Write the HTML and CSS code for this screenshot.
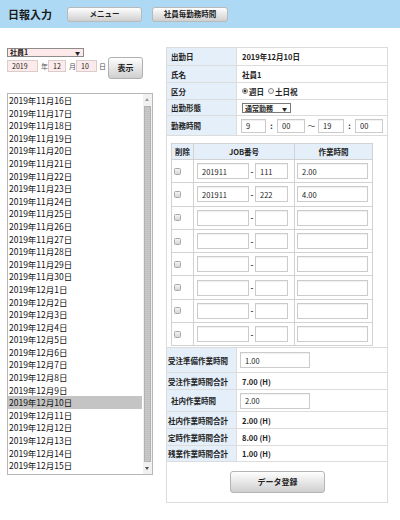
FILE: index.html
```html
<!DOCTYPE html>
<html lang="ja">
<head>
<meta charset="utf-8">
<title>日報入力</title>
<link rel="stylesheet" href="styles.css">
</head>
<body>
<header class="topbar">
  <h1 class="title">日報入力</h1>
  <button class="btn btn-top">メニュー</button>
  <button class="btn btn-top btn-top2">社員毎勤務時間</button>
</header>
<main class="main">
  <section class="left">
    <div class="fake-select emp-select"><span>社員1</span><span class="sel-arrow">▼</span></div>
    <div class="date-row">
      <input class="in-pink in-year" value="2019"><span class="unit">年</span>
      <input class="in-pink in-month" value="12"><span class="unit">月</span>
      <input class="in-pink in-day" value="10"><span class="unit unit-day">日</span>
      <button class="btn btn-show">表示</button>
    </div>
    <div class="listbox">
      <ul class="list">
        <li>2019年11月16日</li>
        <li>2019年11月17日</li>
        <li>2019年11月18日</li>
        <li>2019年11月19日</li>
        <li>2019年11月20日</li>
        <li>2019年11月21日</li>
        <li>2019年11月22日</li>
        <li>2019年11月23日</li>
        <li>2019年11月24日</li>
        <li>2019年11月25日</li>
        <li>2019年11月26日</li>
        <li>2019年11月27日</li>
        <li>2019年11月28日</li>
        <li>2019年11月29日</li>
        <li>2019年11月30日</li>
        <li>2019年12月1日</li>
        <li>2019年12月2日</li>
        <li>2019年12月3日</li>
        <li>2019年12月4日</li>
        <li>2019年12月5日</li>
        <li>2019年12月6日</li>
        <li>2019年12月7日</li>
        <li>2019年12月8日</li>
        <li>2019年12月9日</li>
        <li class="selected">2019年12月10日</li>
        <li>2019年12月11日</li>
        <li>2019年12月12日</li>
        <li>2019年12月13日</li>
        <li>2019年12月14日</li>
        <li>2019年12月15日</li>
      </ul>
      <div class="scrollbar">
        <div class="sb-arrow sb-up"></div>
        <div class="sb-thumb"></div>
        <div class="sb-arrow sb-down"></div>
      </div>
    </div>
  </section>

  <section class="right">
    <table class="form">
      <tr class="r18"><th>出勤日</th><td class="val">2019年12月10日</td></tr>
      <tr class="r17"><th>氏名</th><td class="val">社員1</td></tr>
      <tr class="r17"><th>区分</th><td class="val">
        <span class="radio-group"><span class="radio checked"></span>週日</span><span class="radio-group"><span class="radio"></span>土日祝</span>
      </td></tr>
      <tr class="r16"><th>出勤形態</th><td class="val">
        <span class="fake-select work-select"><span>通常勤務</span><span class="sel-arrow">▼</span></span>
      </td></tr>
      <tr class="r20"><th>勤務時間</th><td class="val">
        <div class="time-row">
          <input class="in-white t1" value="9"><span class="sep">:</span><input class="in-white t2" value="00"><span class="sep sep-wide">～</span><input class="in-white t3" value="19"><span class="sep">:</span><input class="in-white t4" value="00">
        </div>
      </td></tr>
      <tr><td colspan="2" class="jobcell">
        <table class="jobs">
          <tr class="jh"><th class="c-del">削除</th><th class="c-job">JOB番号</th><th class="c-time">作業時間</th></tr>
          <tr class="jr"><td class="c-del"><span class="chk"></span></td><td class="c-job"><input class="in-white j1" value="201911"><span class="dash">-</span><input class="in-white j2" value="111"></td><td class="c-time"><input class="in-white jt" value="2.00"></td></tr>
          <tr class="jr"><td class="c-del"><span class="chk"></span></td><td class="c-job"><input class="in-white j1" value="201911"><span class="dash">-</span><input class="in-white j2" value="222"></td><td class="c-time"><input class="in-white jt" value="4.00"></td></tr>
          <tr class="jr"><td class="c-del"><span class="chk"></span></td><td class="c-job"><input class="in-white j1" value=""><span class="dash">-</span><input class="in-white j2" value=""></td><td class="c-time"><input class="in-white jt" value=""></td></tr>
          <tr class="jr"><td class="c-del"><span class="chk"></span></td><td class="c-job"><input class="in-white j1" value=""><span class="dash">-</span><input class="in-white j2" value=""></td><td class="c-time"><input class="in-white jt" value=""></td></tr>
          <tr class="jr"><td class="c-del"><span class="chk"></span></td><td class="c-job"><input class="in-white j1" value=""><span class="dash">-</span><input class="in-white j2" value=""></td><td class="c-time"><input class="in-white jt" value=""></td></tr>
          <tr class="jr"><td class="c-del"><span class="chk"></span></td><td class="c-job"><input class="in-white j1" value=""><span class="dash">-</span><input class="in-white j2" value=""></td><td class="c-time"><input class="in-white jt" value=""></td></tr>
          <tr class="jr"><td class="c-del"><span class="chk"></span></td><td class="c-job"><input class="in-white j1" value=""><span class="dash">-</span><input class="in-white j2" value=""></td><td class="c-time"><input class="in-white jt" value=""></td></tr>
          <tr class="jr"><td class="c-del"><span class="chk"></span></td><td class="c-job"><input class="in-white j1" value=""><span class="dash">-</span><input class="in-white j2" value=""></td><td class="c-time"><input class="in-white jt" value=""></td></tr>
        </table>
      </td></tr>
      <tr class="r25"><th class="long">受注準備作業時間</th><td class="val"><input class="in-white in-hours" value="1.00"></td></tr>
      <tr class="r17"><th class="long">受注作業時間合計</th><td class="val">7.00 (H)</td></tr>
      <tr class="r22"><th>社内作業時間</th><td class="val"><input class="in-white in-hours" value="2.00"></td></tr>
      <tr class="r17"><th class="long">社内作業時間合計</th><td class="val">2.00 (H)</td></tr>
      <tr class="r17"><th class="long">定時作業時間合計</th><td class="val">8.00 (H)</td></tr>
      <tr class="r16"><th class="long">残業作業時間合計</th><td class="val">1.00 (H)</td></tr>
      <tr class="r41"><td colspan="2" class="submit-cell"><button class="btn btn-submit">データ登録</button></td></tr>
    </table>
  </section>
</main>
</body>
</html>
```

FILE: styles.css
```css
* {
  box-sizing: border-box;
}

body {
  margin: 0;
  width: 400px;
  height: 520px;
  overflow: hidden;
  background: #ffffff;
  color: #222222;
  font-family: "Noto Sans CJK JP", "Noto Sans", "Liberation Sans", sans-serif;
}

/* ---------- header ---------- */
.topbar {
  height: 28px;
  background: #aed9f5;
  display: flex;
  align-items: center;
  padding-left: 8px;
}

.title {
  margin: 0;
  width: 44px;
  font-size: 11px;
  line-height: 1;
  font-weight: 700;
  color: #1a1a1a;
  white-space: nowrap;
}

.btn {
  font-family: inherit;
  font-weight: 700;
  color: #222222;
  border: 1px solid #b9b9b9;
  border-radius: 3px;
  background: linear-gradient(#fefefe, #e9e9e9 45%, #cfcfcf);
  padding: 0;
  line-height: 1;
  white-space: nowrap;
}

.btn-top {
  width: 75px;
  height: 15px;
  margin-left: 15px;
  font-size: 7.5px;
}

.btn-top2 {
  width: 76px;
  margin-left: 10px;
}

/* ---------- main ---------- */
.main {
  display: flex;
  align-items: flex-start;
  padding: 19px 0 0 7px;
}

.left {
  width: 146px;
  flex: none;
}

.right {
  width: 222px;
  margin-left: 13px;
  flex: none;
}

/* fake selects */
.fake-select {
  display: flex;
  align-items: center;
  justify-content: space-between;
  border: 1px solid #8c8c8c;
  font-weight: 700;
  color: #222222;
  white-space: nowrap;
}

.sel-arrow {
  font-size: 5px;
  line-height: 1;
  color: #222222;
}

.emp-select {
  margin-top: 1px;
  width: 77px;
  height: 9px;
  padding: 0 3px 0 2px;
  background: #fde9e9;
  font-size: 7px;
  line-height: 7px;
}

.date-row {
  display: flex;
  align-items: flex-start;
  height: 22px;
}

.in-pink,
.in-white {
  font-family: inherit;
  color: #222222;
  outline: none;
  margin: 0;
}

.in-pink {
  height: 12px;
  margin-top: 3px;
  border: 1px solid #d8cccc;
  background: #fdeaea;
  font-size: 7px;
  padding: 0 0 0 4px;
}

.in-year { width: 31px; }
.in-month { width: 18px; }
.in-day { width: 21px; }

.unit {
  margin-top: 3px;
  margin-left: 3px;
  height: 12px;
  line-height: 12px;
  font-size: 7px;
  color: #555555;
}

.unit-day {
  margin-left: 2px;
}

.btn-show {
  width: 35px;
  height: 22px;
  margin-left: 2px;
  font-size: 8px;
  border-color: #b0b0b0;
}

/* list box */
.listbox {
  margin-top: 14px;
  width: 146px;
  height: 382px;
  border: 1px solid #b6b6b6;
  display: flex;
  overflow: hidden;
  background: #ffffff;
}

.list {
  list-style: none;
  margin: 0;
  padding: 0;
  flex: 1;
  overflow: hidden;
}

.list li {
  height: 12.6px;
  line-height: 12.6px;
  font-size: 8.5px;
  padding-left: 1px;
  color: #111111;
  white-space: nowrap;
}

.list li.selected {
  background: #c4c4c4;
  margin-right: 1px;
}

.scrollbar {
  width: 9px;
  flex: none;
  display: flex;
  flex-direction: column;
  background: #f1f1f1;
}

.sb-arrow {
  height: 11px;
  position: relative;
}

.sb-up::after,
.sb-down::after {
  content: "";
  position: absolute;
  left: 2px;
  border-left: 2.5px solid transparent;
  border-right: 2.5px solid transparent;
}

.sb-up::after {
  top: 4px;
  border-bottom: 3px solid #9a9a9a;
}

.sb-down::after {
  top: 4px;
  border-top: 3px solid #505050;
}

.sb-thumb {
  flex: 1;
  margin: 1px 1px 1px 1px;
  border: 1px solid #b3b3b3;
  background: repeating-linear-gradient(0deg, #c9c9c9 0, #c9c9c9 1px, #c1c1c1 1px, #c1c1c1 2px);
}

/* ---------- form table ---------- */
.form {
  width: 222px;
  border-collapse: collapse;
  border: 1px solid #d2d2d2;
  font-size: 7.5px;
  table-layout: fixed;
}

.form > tbody > tr > th,
.form > tbody > tr > td {
  border: 1px solid #dcdcdc;
  padding: 0;
  vertical-align: middle;
}

.form > tbody > tr > th {
  width: 70px;
  padding-left: 4px;
  background: #e4effa;
  text-align: left;
  font-weight: 700;
  color: #222222;
  white-space: nowrap;
}

.form > tbody > tr > th.long {
  padding-left: 1px;
}

.form td.val {
  padding-left: 5px;
  font-weight: 700;
  white-space: nowrap;
}

.r16 { height: 16px; }
.r17 { height: 17px; }
.r18 { height: 18px; }
.r20 { height: 20px; }
.r22 { height: 22px; }
.r25 { height: 25px; }
.r41 { height: 41px; }

.radio-group {
  display: inline-flex;
  align-items: center;
  margin-right: 4px;
}

.radio {
  display: inline-block;
  width: 6px;
  height: 6px;
  border: 1px solid #8a8a8a;
  border-radius: 50%;
  margin-right: 1px;
  background: #f3f3f3;
}

.radio.checked {
  background: radial-gradient(circle, #333333 0, #333333 1.2px, #f3f3f3 1.7px);
}

.work-select {
  display: inline-flex;
  width: 49px;
  height: 10px;
  padding: 0 3px 0 2px;
  background: #ffffff;
  font-size: 7px;
  line-height: 8px;
  border-color: #7a7a7a;
  vertical-align: middle;
}

.in-white {
  height: 16px;
  border: 1px solid #cbcbcb;
  background: #ffffff;
  font-size: 7.5px;
  padding: 0 0 0 4px;
  box-shadow: inset 0 1px 1px rgba(0, 0, 0, 0.06);
}

.time-row {
  display: flex;
  align-items: center;
  margin-left: -1px;
}

.time-row .in-white {
  height: 14px;
}

.t1 { width: 25px; }
.t2 { width: 28px; }
.t3 { width: 26px; }
.t4 { width: 28px; }

.sep {
  width: 11px;
  text-align: center;
  font-size: 7.5px;
  font-weight: 700;
}

.sep-wide {
  width: 13px;
  font-weight: 400;
}

/* job table */
.form td.jobcell {
  padding: 7px 0 1px 4px;
  vertical-align: top;
}

.jobs {
  width: 201px;
  border-collapse: collapse;
  table-layout: fixed;
  border: 1px solid #cfcfcf;
  font-size: 7.5px;
}

.jobs th,
.jobs td {
  border: 1px solid #d2d2d2;
  padding: 0;
  vertical-align: middle;
}

.jobs th {
  background: #e4effa;
  font-weight: 700;
  text-align: center;
  height: 16px;
}

.jobs .c-del { width: 22px; }
.jobs .c-job { width: 101px; }
.jobs .c-time { width: 78px; }

.jr { height: 23.3px; }

.jr td.c-del {
  padding-left: 2px;
}

.chk {
  display: block;
  width: 7px;
  height: 7px;
  border: 1px solid #a8a8a8;
  border-radius: 1.5px;
  background: linear-gradient(#f4f4f4, #d6d6d6);
}

.jr td.c-job {
  padding-left: 3px;
  white-space: nowrap;
}

.jr td.c-job,
.jr td.c-time {
  font-size: 0;
}

.j1 { width: 52px; vertical-align: middle; }
.j2 { width: 33px; vertical-align: middle; }

.dash {
  display: inline-block;
  width: 6px;
  text-align: center;
  font-size: 7.5px;
  font-weight: 700;
  vertical-align: middle;
}

.jr td.c-time {
  padding-left: 2px;
}

.jt {
  width: 71px;
  vertical-align: middle;
}

.in-hours {
  width: 70px;
  margin-left: -2px;
  vertical-align: middle;
}

.form td.submit-cell {
  text-align: center;
  padding: 0;
}

.btn-submit {
  width: 95px;
  height: 22px;
  font-size: 8px;
  margin-left: 1px;
  border-color: #b5b5b5;
}
```
